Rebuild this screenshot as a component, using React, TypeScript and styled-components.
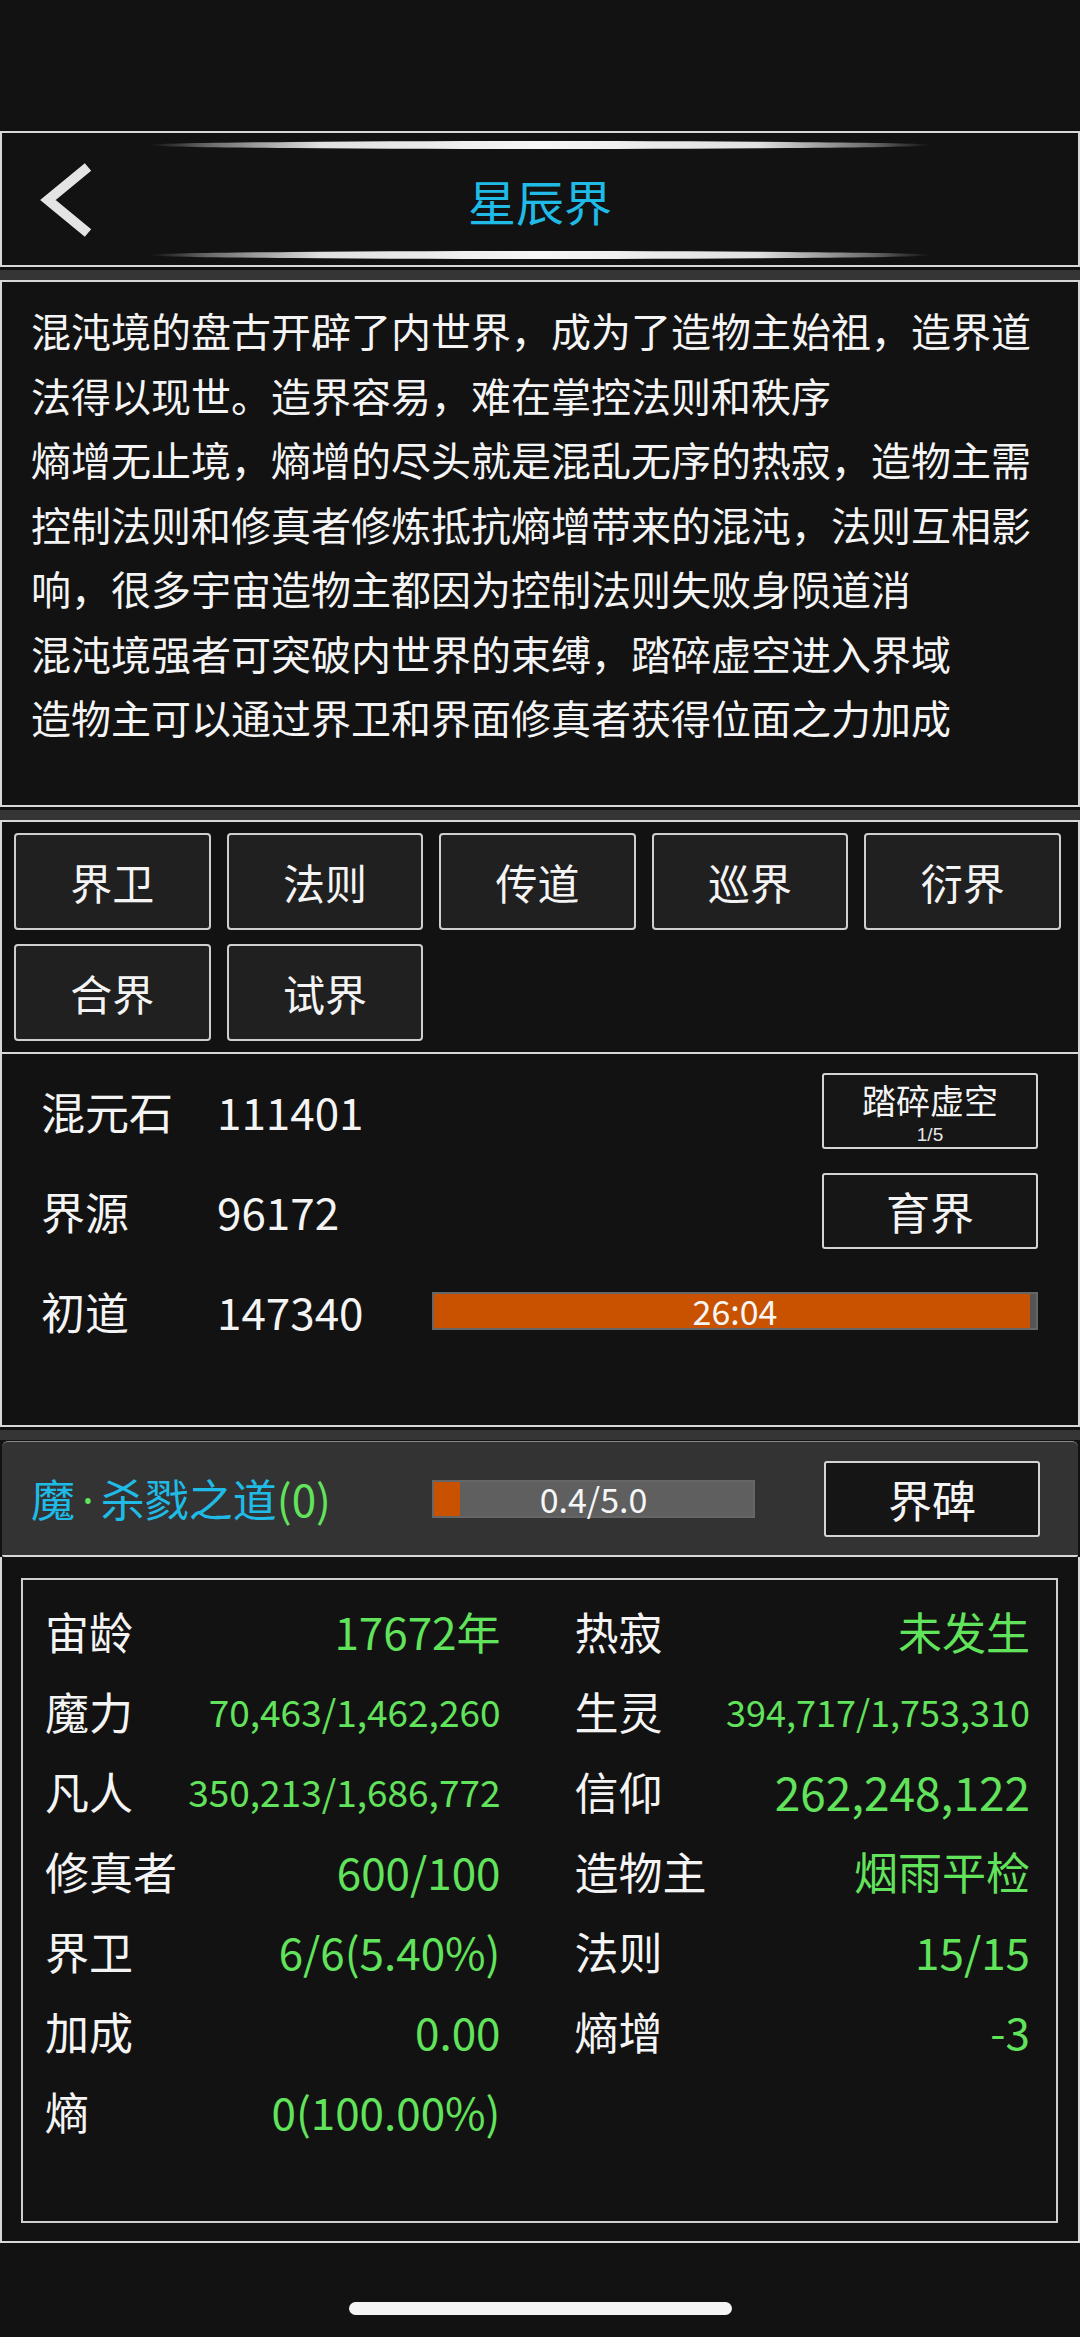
import React from 'react';
import styled, { createGlobalStyle } from 'styled-components';

const GlobalStyle = createGlobalStyle`
  html, body {
    margin: 0;
    padding: 0;
    background: #121212;
  }
  body {
    font-family: "Noto Sans CJK SC", "Noto Sans", sans-serif;
    color: #f2f2f2;
  }
  * {
    box-sizing: border-box;
  }
`

const LINE = '#d8d8d8'
const CYAN = '#1fbbe6'
const GREEN = '#62e35c'
const ORANGE = '#c85200'

const Page = styled.div`
  width: 1080px;
  min-height: 2337px;
  display: flex;
  flex-direction: column;
`

const TopSpace = styled.div`
  height: 131px;
`

const Header = styled.header`
  height: 136px;
  border: 2px solid ${LINE};
  display: flex;
  flex-direction: column;
  align-items: center;
  padding: 8px 0 6px;
`

const Glow = styled.div`
  width: 780px;
  height: 8px;
  border-radius: 50%;
  background: linear-gradient(
    90deg,
    rgba(120, 120, 120, 0) 0%,
    rgba(150, 150, 150, 0.7) 8%,
    rgba(235, 235, 235, 0.95) 22%,
    #f6f6f6 50%,
    rgba(235, 235, 235, 0.95) 78%,
    rgba(150, 150, 150, 0.7) 92%,
    rgba(120, 120, 120, 0) 100%
  );
`

const TitleRow = styled.div`
  flex: 1;
  width: 100%;
  display: grid;
  grid-template-columns: 1fr auto 1fr;
  align-items: center;
`

const BackButton = styled.div`
  padding-left: 35px;
  display: flex;
  align-items: center;
  cursor: pointer;
`

const Title = styled.h1`
  margin: 0;
  font-size: 48px;
  font-weight: 400;
  line-height: 60px;
  color: ${CYAN};
`

const Separator = styled.div`
  height: 13px;
  border-top: 3px solid #121212;
  background: #353535;
`

const Panel = styled.section<{ $noTop?: boolean }>`
  border: 2px solid ${LINE};
  border-top-width: ${p => (p.$noTop ? 0 : 2)}px;
  background: #121212;
`

const Description = styled(Panel)`
  height: 527px;
  padding: 16px 0 0 29px;
`

const Para = styled.p`
  margin: 0;
  width: 1004px;
  font-size: 40px;
  line-height: 64.5px;
  color: #f4f4f4;
`

const ActionGrid = styled(Panel)`
  display: grid;
  grid-template-columns: repeat(5, 1fr);
  grid-auto-rows: 97px;
  column-gap: 16px;
  row-gap: 14px;
  padding: 11px 17px 11px 12px;
`

const ActionButton = styled.div`
  display: flex;
  align-items: center;
  justify-content: center;
  background: #202020;
  border: 2px solid #cfcfcf;
  border-radius: 4px;
  font-size: 42px;
  color: #f4f4f4;
  cursor: pointer;
`

const Resources = styled(Panel)`
  height: 373px;
  padding: 7px 40px 0 39px;
`

const ResRow = styled.div`
  height: 100px;
  display: grid;
  grid-template-columns: 178px 213px 1fr;
  align-items: center;
`

const ResLabel = styled.span`
  font-size: 44px;
  line-height: 56px;
  color: #f4f4f4;
`

const ResValue = styled(ResLabel)`
  margin-left: -2px;
`

const BoxButton = styled.div<{ $dark?: boolean }>`
  justify-self: end;
  width: 216px;
  height: 76px;
  display: flex;
  flex-direction: column;
  align-items: center;
  justify-content: center;
  background: ${p => (p.$dark ? '#151515' : '#161616')};
  border: 2px solid #d4d4d4;
  border-radius: 3px;
  font-size: 44px;
  line-height: 52px;
  color: #f4f4f4;
  cursor: pointer;
`

const ButtonMain = styled.span`
  font-size: 34px;
  line-height: 46px;
`

const ButtonSub = styled.span`
  font-family: "Liberation Sans", sans-serif;
  font-size: 19px;
  line-height: 23px;
  color: #e8e8e8;
`

const Bar = styled.div<{ $track: string }>`
  position: relative;
  height: 38px;
  background: ${p => p.$track};
  border: 2px solid #666;
  display: flex;
  align-items: center;
  justify-content: center;
`

const BarFill = styled.div`
  position: absolute;
  left: 0;
  top: 0;
  bottom: 0;
  background: ${ORANGE};
`

const BarText = styled.span`
  position: relative;
  font-size: 34px;
  line-height: 1;
  color: #f6f6f6;
`

const DaoPanel = styled.section`
  height: 116px;
  margin: 1px 2px 0;
  background: #333;
  border-top: 1px solid #8a8a8a;
  border-bottom: 2px solid ${LINE};
  border-radius: 6px 6px 2px 2px;
  display: grid;
  grid-template-columns: 401px 323px 1fr;
  align-items: center;
  padding: 0 38px 0 29px;
`

const DaoName = styled.span`
  font-size: 44px;
  line-height: 56px;
  color: ${CYAN};
  white-space: nowrap;
`

const Green = styled.span`
  color: ${GREEN};
`

const Dot = styled(Green)`
  font-family: "Noto Sans", sans-serif;
  margin: 0 7px;
`

const StatsPanel = styled.section`
  height: 686px;
  border: 2px solid ${LINE};
  border-top: 0;
  padding: 21px 20px 18px 19px;
`

const StatsBox = styled.div`
  height: 100%;
  border: 2px solid #cfcfcf;
  padding: 11px 26px 0 22px;
  display: grid;
  grid-template-columns: 1fr 1fr;
  grid-auto-rows: 80px;
  column-gap: 74px;
  align-content: start;
`

const StatCell = styled.div`
  display: flex;
  align-items: center;
  justify-content: space-between;
  white-space: nowrap;
`

const StatLabel = styled.span`
  font-size: 44px;
  line-height: 56px;
  color: #f4f4f4;
`

const StatValue = styled.span<{ $size?: number }>`
  font-size: ${p => p.$size || 44}px;
  line-height: 56px;
  color: ${GREEN};
`

const Bottom = styled.div`
  flex: 1;
  display: flex;
  justify-content: center;
  padding-top: 59px;
`

const HomeIndicator = styled.div`
  width: 383px;
  height: 13px;
  border-radius: 7px;
  background: #f4f4f4;
`

const BackIcon = () => (
  <svg width='60' height='80' viewBox='0 0 60 80'>
    <polyline
      points='51,7 11,40 51,73'
      fill='none'
      stroke='#e4e4e4'
      strokeWidth='10'
      strokeLinejoin='miter'
    />
  </svg>
)

const ACTIONS = ['界卫', '法则', '传道', '巡界', '衍界', '合界', '试界']

const STATS: [string, string, number?][] = [
  ['宙龄', '17672年'],
  ['热寂', '未发生'],
  ['魔力', '70,463/1,462,260', 37],
  ['生灵', '394,717/1,753,310', 36],
  ['凡人', '350,213/1,686,772', 37],
  ['信仰', '262,248,122', 46],
  ['修真者', '600/100'],
  ['造物主', '烟雨平检'],
  ['界卫', '6/6(5.40%)'],
  ['法则', '15/15'],
  ['加成', '0.00'],
  ['熵增', '-3'],
  ['熵', '0(100.00%)'],
]

export default function App() {
  return (
    <Page>
      <GlobalStyle />
      <TopSpace />
      <Header>
        <Glow />
        <TitleRow>
          <BackButton>
            <BackIcon />
          </BackButton>
          <Title>星辰界</Title>
          <div />
        </TitleRow>
        <Glow />
      </Header>
      <Separator />
      <Description>
        <Para>混沌境的盘古开辟了内世界，成为了造物主始祖，造界道法得以现世。造界容易，难在掌控法则和秩序</Para>
        <Para>熵增无止境，熵增的尽头就是混乱无序的热寂，造物主需控制法则和修真者修炼抵抗熵增带来的混沌，法则互相影响，很多宇宙造物主都因为控制法则失败身陨道消</Para>
        <Para>混沌境强者可突破内世界的束缚，踏碎虚空进入界域</Para>
        <Para>造物主可以通过界卫和界面修真者获得位面之力加成</Para>
      </Description>
      <Separator />
      <ActionGrid>
        {ACTIONS.map(a => (
          <ActionButton key={a}>{a}</ActionButton>
        ))}
      </ActionGrid>
      <Resources $noTop>
        <ResRow>
          <ResLabel>混元石</ResLabel>
          <ResValue>111401</ResValue>
          <BoxButton>
            <ButtonMain>踏碎虚空</ButtonMain>
            <ButtonSub>1/5</ButtonSub>
          </BoxButton>
        </ResRow>
        <ResRow>
          <ResLabel>界源</ResLabel>
          <ResValue>96172</ResValue>
          <BoxButton>育界</BoxButton>
        </ResRow>
        <ResRow>
          <ResLabel>初道</ResLabel>
          <ResValue>147340</ResValue>
          <Bar $track='#555'>
            <BarFill style={{ width: '99%' }} />
            <BarText>26:04</BarText>
          </Bar>
        </ResRow>
      </Resources>
      <Separator />
      <DaoPanel>
        <DaoName>
          魔<Dot>·</Dot>杀戮之道<Green>(0)</Green>
        </DaoName>
        <Bar $track='#5f5f5f'>
          <BarFill style={{ width: `${(0.4 / 5) * 100}%` }} />
          <BarText>0.4/5.0</BarText>
        </Bar>
        <BoxButton $dark>界碑</BoxButton>
      </DaoPanel>
      <StatsPanel>
        <StatsBox>
          {STATS.map(([label, value, size]) => (
            <StatCell key={label + value}>
              <StatLabel>{label}</StatLabel>
              <StatValue $size={size}>{value}</StatValue>
            </StatCell>
          ))}
        </StatsBox>
      </StatsPanel>
      <Bottom>
        <HomeIndicator />
      </Bottom>
    </Page>
  )
}
